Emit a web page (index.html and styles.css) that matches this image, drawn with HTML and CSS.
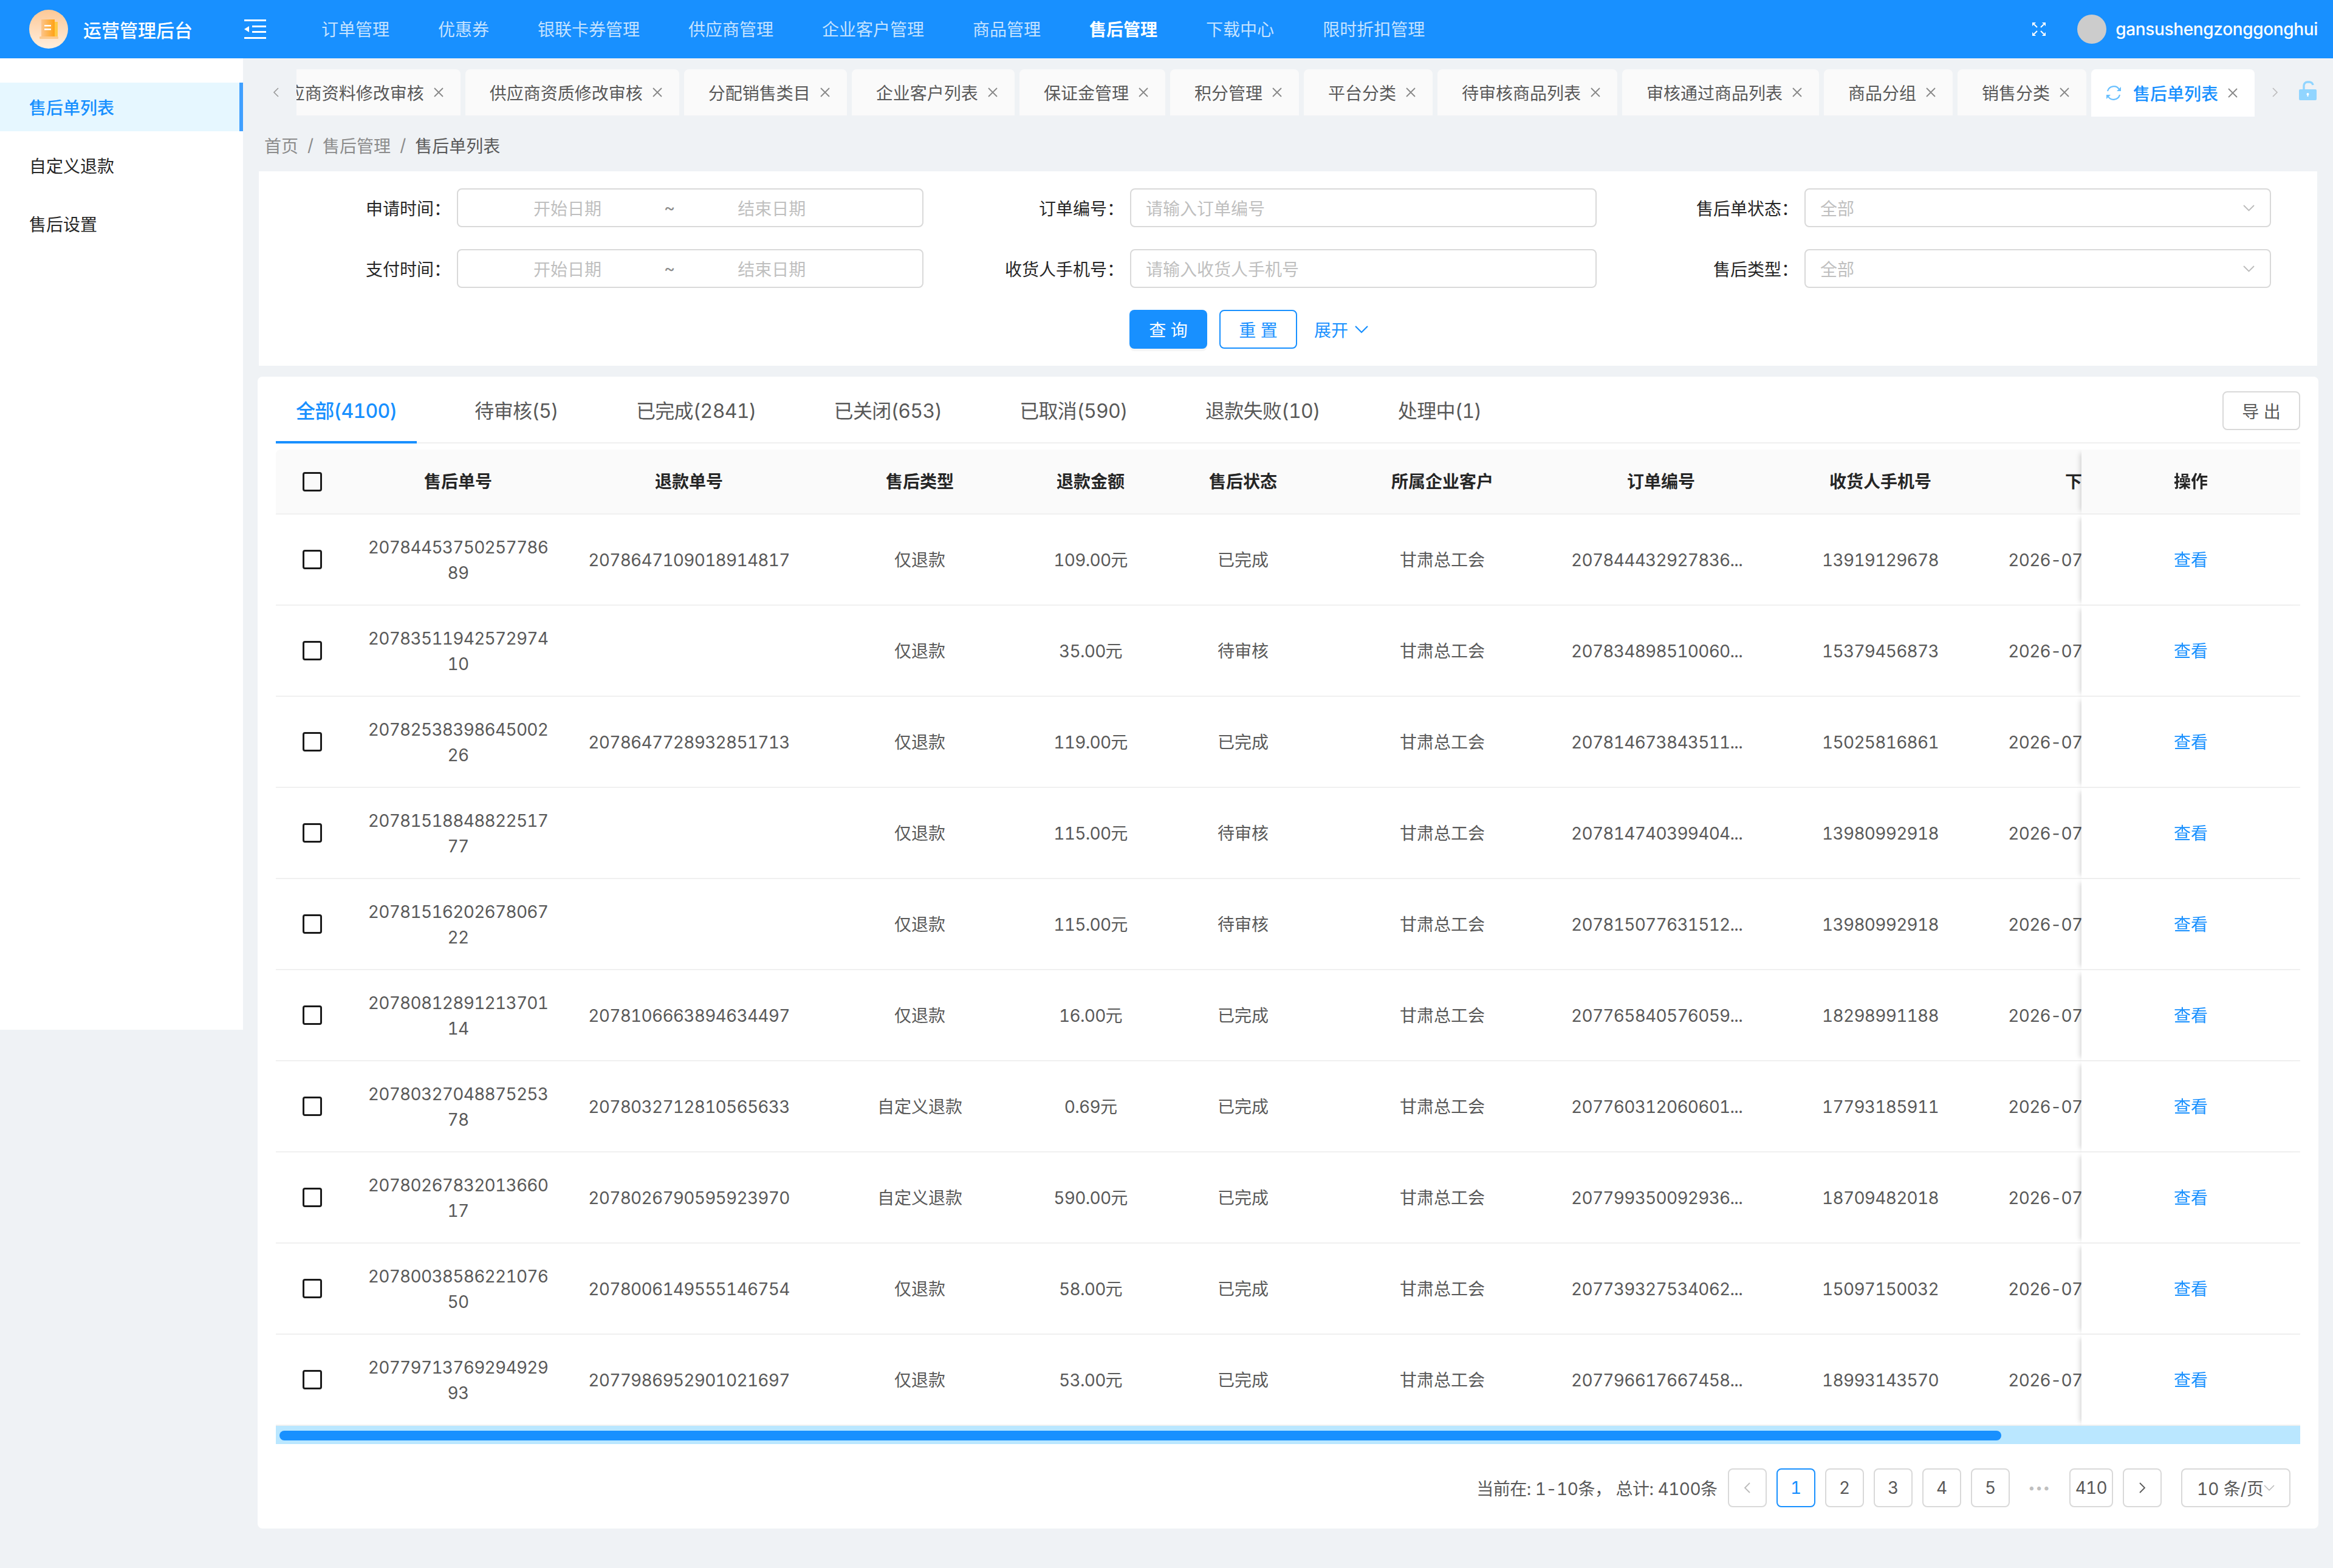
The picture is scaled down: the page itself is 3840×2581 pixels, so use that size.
FILE: index.html
```html
<!DOCTYPE html>
<html lang="zh-CN">
<head>
  <meta charset="UTF-8" />
  <title>售后单列表 | 运营管理后台</title>
  <link rel="stylesheet" href="styles.css">
</head>
<body>
  <header class="topbar">
    <div class="logo">
      <svg class="logo-mark" width="64" height="64" viewBox="0 0 64 64">
        <defs>
          <linearGradient id="logoBg" x1="0" y1="0" x2="0" y2="1">
            <stop offset="0" stop-color="#fdc896" />
            <stop offset="1" stop-color="#ffefdf" />
          </linearGradient>
          <linearGradient id="logoDoc" x1="0" y1="0" x2="1" y2="0">
            <stop offset="0" stop-color="#fdc48a" />
            <stop offset="1" stop-color="#ffa215" />
          </linearGradient>
        </defs>
        <circle cx="32" cy="32" r="32" fill="url(#logoBg)" />
        <rect x="40" y="20" width="7" height="26" fill="#ffc942" />
        <rect x="20" y="16" width="22" height="30" fill="url(#logoDoc)" />
        <rect x="25" y="25" width="11" height="2.5" fill="#fff" />
        <rect x="25" y="31" width="11" height="2.5" fill="#fff" />
        <rect x="17" y="44" width="31" height="4" rx="1" fill="#fdc98c" />
      </svg>
      <span class="logo-title">运营管理后台</span>
    </div>
    <svg class="collapse-icon" width="36" height="32" viewBox="0 0 36 32" fill="#fff">
      <rect x="0" y="0" width="36" height="3" />
      <rect x="13" y="10" width="23" height="3" />
      <rect x="13" y="19" width="23" height="3" />
      <rect x="0" y="29" width="36" height="3" />
      <polygon points="0,16 8,11 8,21" />
    </svg>
    <nav class="topnav">
      <a href="#">订单管理</a>
      <a href="#">优惠券</a>
      <a href="#">银联卡券管理</a>
      <a href="#">供应商管理</a>
      <a href="#">企业客户管理</a>
      <a href="#">商品管理</a>
      <a href="#" class="active">售后管理</a>
      <a href="#">下载中心</a>
      <a href="#">限时折扣管理</a>
    </nav>
    <div class="topbar-right">
      <svg class="fullscreen-icon" width="22" height="22" viewBox="0 0 22 22" fill="#fff" stroke="#fff" stroke-width="2">
        <path d="M3 3l5 5" />
        <path d="M19 3l-5 5" />
        <path d="M3 19l5-5" />
        <path d="M19 19l-5-5" />
        <polygon points="0,0 6,0 0,6" stroke="none" />
        <polygon points="22,0 16,0 22,6" stroke="none" />
        <polygon points="0,22 6,22 0,16" stroke="none" />
        <polygon points="22,22 16,22 22,16" stroke="none" />
      </svg>
      <span class="avatar"></span>
      <span class="username">gansushengzonggonghui</span>
    </div>
  </header>

  <div class="layout">
    <aside class="sidebar">
      <a href="#" class="side-item active">售后单列表</a>
      <a href="#" class="side-item">自定义退款</a>
      <a href="#" class="side-item">售后设置</a>
    </aside>

    <main class="content">
      <div class="page-tabs">
        <svg class="page-arrow" width="12" height="18" viewBox="0 0 12 18" fill="none" stroke="#999" stroke-width="1.6">
          <path d="M10 2L3 9l7 7" />
        </svg>
        <div class="page-tabs-list">
          <div class="page-tab">供应商资料修改审核<svg class="tab-close" width="18" height="18" viewBox="0 0 18 18"><path d="M2 2l14 14M16 2L2 16" /></svg></div>
          <div class="page-tab">供应商资质修改审核<svg class="tab-close" width="18" height="18" viewBox="0 0 18 18"><path d="M2 2l14 14M16 2L2 16" /></svg></div>
          <div class="page-tab">分配销售类目<svg class="tab-close" width="18" height="18" viewBox="0 0 18 18"><path d="M2 2l14 14M16 2L2 16" /></svg></div>
          <div class="page-tab">企业客户列表<svg class="tab-close" width="18" height="18" viewBox="0 0 18 18"><path d="M2 2l14 14M16 2L2 16" /></svg></div>
          <div class="page-tab">保证金管理<svg class="tab-close" width="18" height="18" viewBox="0 0 18 18"><path d="M2 2l14 14M16 2L2 16" /></svg></div>
          <div class="page-tab">积分管理<svg class="tab-close" width="18" height="18" viewBox="0 0 18 18"><path d="M2 2l14 14M16 2L2 16" /></svg></div>
          <div class="page-tab">平台分类<svg class="tab-close" width="18" height="18" viewBox="0 0 18 18"><path d="M2 2l14 14M16 2L2 16" /></svg></div>
          <div class="page-tab">待审核商品列表<svg class="tab-close" width="18" height="18" viewBox="0 0 18 18"><path d="M2 2l14 14M16 2L2 16" /></svg></div>
          <div class="page-tab">审核通过商品列表<svg class="tab-close" width="18" height="18" viewBox="0 0 18 18"><path d="M2 2l14 14M16 2L2 16" /></svg></div>
          <div class="page-tab">商品分组<svg class="tab-close" width="18" height="18" viewBox="0 0 18 18"><path d="M2 2l14 14M16 2L2 16" /></svg></div>
          <div class="page-tab">销售分类<svg class="tab-close" width="18" height="18" viewBox="0 0 18 18"><path d="M2 2l14 14M16 2L2 16" /></svg></div>
          <div class="page-tab active">
            <svg class="tab-refresh" width="26" height="26" viewBox="0 0 26 26" fill="none" stroke="#69c0ff" stroke-width="2.2">
              <path d="M3 10A10.5 10.5 0 0 1 22 7" />
              <path d="M23 16A10.5 10.5 0 0 1 4 19" />
              <polygon points="25,3 25,10 18,10" fill="#69c0ff" stroke="none" />
              <polygon points="1,23 1,16 8,16" fill="#69c0ff" stroke="none" />
            </svg>
            售后单列表<svg class="tab-close" width="18" height="18" viewBox="0 0 18 18"><path d="M2 2l14 14M16 2L2 16" /></svg>
          </div>
        </div>
        <svg class="page-arrow right" width="12" height="18" viewBox="0 0 12 18" fill="none" stroke="#bbb" stroke-width="1.6">
          <path d="M2 2l7 7-7 7" />
        </svg>
        <svg class="lock-icon" width="29" height="32" viewBox="0 0 29 32">
          <path d="M8 15V8a6 6 0 0 1 6-6h3a6 6 0 0 1 6 5" fill="none" stroke="#91d5ff" stroke-width="3.4" />
          <rect x="0" y="14" width="29" height="18" rx="2" fill="#91d5ff" />
          <circle cx="14.5" cy="22" r="2" fill="#fff" />
          <rect x="13.6" y="22" width="1.8" height="4" fill="#fff" />
        </svg>
      </div>

      <div class="breadcrumb">
        <span>首页</span><i>/</i><span>售后管理</span><i>/</i><span class="current">售后单列表</span>
      </div>

      <section class="filter-card">
        <label class="form-label">申请时间：</label>
        <div class="form-control range">
          <span>开始日期</span><em>~</em><span>结束日期</span>
        </div>
        <label class="form-label">订单编号：</label>
        <div class="form-control">请输入订单编号</div>
        <label class="form-label">售后单状态：</label>
        <div class="form-control select">全部
          <svg width="21" height="12" viewBox="0 0 21 12" fill="none" stroke="#bbb" stroke-width="1.8"><path d="M2 2l8.500 8.500L19 2" /></svg>
        </div>

        <label class="form-label">支付时间：</label>
        <div class="form-control range">
          <span>开始日期</span><em>~</em><span>结束日期</span>
        </div>
        <label class="form-label">收货人手机号：</label>
        <div class="form-control">请输入收货人手机号</div>
        <label class="form-label">售后类型：</label>
        <div class="form-control select">全部
          <svg width="21" height="12" viewBox="0 0 21 12" fill="none" stroke="#bbb" stroke-width="1.8"><path d="M2 2l8.500 8.500L19 2" /></svg>
        </div>

        <div class="form-actions">
          <button class="btn btn-primary">查 询</button>
          <button class="btn btn-outline">重 置</button>
          <a href="#" class="expand-link">展开
            <svg width="24" height="14" viewBox="0 0 24 14" fill="none" stroke="#1890ff" stroke-width="2.200"><path d="M2 2l10 10L22 2" /></svg>
          </a>
        </div>
      </section>

      <section class="table-card">
        <div class="status-bar">
          <div class="status-tabs">
            <a href="#" class="status-tab active">全部(4100)</a>
            <a href="#" class="status-tab">待审核(5)</a>
            <a href="#" class="status-tab">已完成(2841)</a>
            <a href="#" class="status-tab">已关闭(653)</a>
            <a href="#" class="status-tab">已取消(590)</a>
            <a href="#" class="status-tab">退款失败(10)</a>
            <a href="#" class="status-tab">处理中(1)</a>
          </div>
          <button class="export-btn">导 出</button>
        </div>

        <div class="table-wrap">
          <table class="order-table">
            <colgroup>
              <col class="col-check">
              <col class="col-no">
              <col class="col-refund">
              <col class="col-type">
              <col class="col-amount">
              <col class="col-status">
              <col class="col-company">
              <col class="col-order">
              <col class="col-phone">
              <col class="col-date">
              <col class="col-op">
            </colgroup>
            <thead>
              <tr>
                <th><span class="checkbox"></span></th>
                <th>售后单号</th>
                <th>退款单号</th>
                <th>售后类型</th>
                <th>退款金额</th>
                <th>售后状态</th>
                <th>所属企业客户</th>
                <th>订单编号</th>
                <th>收货人手机号</th>
                <th>下单时间</th>
                <th class="op">操作</th>
              </tr>
            </thead>
            <tbody>
              <tr>
                <td><span class="checkbox"></span></td>
                <td class="no-cell">2078445375025778689</td>
                <td>2078647109018914817</td>
                <td>仅退款</td>
                <td>109.00元</td>
                <td>已完成</td>
                <td>甘肃总工会</td>
                <td class="order-cell">207844432927836...</td>
                <td>13919129678</td>
                <td>2026-07-15 10:24:36</td>
                <td class="op"><a href="#">查看</a></td>
              </tr>
              <tr>
                <td><span class="checkbox"></span></td>
                <td class="no-cell">2078351194257297410</td>
                <td></td>
                <td>仅退款</td>
                <td>35.00元</td>
                <td>待审核</td>
                <td>甘肃总工会</td>
                <td class="order-cell">207834898510060...</td>
                <td>15379456873</td>
                <td>2026-07-15 09:12:08</td>
                <td class="op"><a href="#">查看</a></td>
              </tr>
              <tr>
                <td><span class="checkbox"></span></td>
                <td class="no-cell">2078253839864500226</td>
                <td>2078647728932851713</td>
                <td>仅退款</td>
                <td>119.00元</td>
                <td>已完成</td>
                <td>甘肃总工会</td>
                <td class="order-cell">207814673843511...</td>
                <td>15025816861</td>
                <td>2026-07-14 18:40:51</td>
                <td class="op"><a href="#">查看</a></td>
              </tr>
              <tr>
                <td><span class="checkbox"></span></td>
                <td class="no-cell">2078151884882251777</td>
                <td></td>
                <td>仅退款</td>
                <td>115.00元</td>
                <td>待审核</td>
                <td>甘肃总工会</td>
                <td class="order-cell">207814740399404...</td>
                <td>13980992918</td>
                <td>2026-07-14 15:03:22</td>
                <td class="op"><a href="#">查看</a></td>
              </tr>
              <tr>
                <td><span class="checkbox"></span></td>
                <td class="no-cell">2078151620267806722</td>
                <td></td>
                <td>仅退款</td>
                <td>115.00元</td>
                <td>待审核</td>
                <td>甘肃总工会</td>
                <td class="order-cell">207815077631512...</td>
                <td>13980992918</td>
                <td>2026-07-14 15:01:47</td>
                <td class="op"><a href="#">查看</a></td>
              </tr>
              <tr>
                <td><span class="checkbox"></span></td>
                <td class="no-cell">2078081289121370114</td>
                <td>2078106663894634497</td>
                <td>仅退款</td>
                <td>16.00元</td>
                <td>已完成</td>
                <td>甘肃总工会</td>
                <td class="order-cell">207765840576059...</td>
                <td>18298991188</td>
                <td>2026-07-14 11:36:19</td>
                <td class="op"><a href="#">查看</a></td>
              </tr>
              <tr>
                <td><span class="checkbox"></span></td>
                <td class="no-cell">2078032704887525378</td>
                <td>2078032712810565633</td>
                <td>自定义退款</td>
                <td>0.69元</td>
                <td>已完成</td>
                <td>甘肃总工会</td>
                <td class="order-cell">207760312060601...</td>
                <td>17793185911</td>
                <td>2026-07-14 09:58:02</td>
                <td class="op"><a href="#">查看</a></td>
              </tr>
              <tr>
                <td><span class="checkbox"></span></td>
                <td class="no-cell">2078026783201366017</td>
                <td>2078026790595923970</td>
                <td>自定义退款</td>
                <td>590.00元</td>
                <td>已完成</td>
                <td>甘肃总工会</td>
                <td class="order-cell">207799350092936...</td>
                <td>18709482018</td>
                <td>2026-07-14 09:31:44</td>
                <td class="op"><a href="#">查看</a></td>
              </tr>
              <tr>
                <td><span class="checkbox"></span></td>
                <td class="no-cell">2078003858622107650</td>
                <td>2078006149555146754</td>
                <td>仅退款</td>
                <td>58.00元</td>
                <td>已完成</td>
                <td>甘肃总工会</td>
                <td class="order-cell">207739327534062...</td>
                <td>15097150032</td>
                <td>2026-07-14 08:02:15</td>
                <td class="op"><a href="#">查看</a></td>
              </tr>
              <tr>
                <td><span class="checkbox"></span></td>
                <td class="no-cell">2077971376929492993</td>
                <td>2077986952901021697</td>
                <td>仅退款</td>
                <td>53.00元</td>
                <td>已完成</td>
                <td>甘肃总工会</td>
                <td class="order-cell">207796617667458...</td>
                <td>18993143570</td>
                <td>2026-07-13 21:17:33</td>
                <td class="op"><a href="#">查看</a></td>
              </tr>
            </tbody>
          </table>
        </div>
        <div class="scroll-track"><div class="scroll-thumb"></div></div>

        <div class="pagination">
          <span class="page-total">当前在: 1-10条， 总计: 4100条</span>
          <a href="#" class="page-btn disabled">
            <svg width="12" height="20" viewBox="0 0 12 20" fill="none" stroke="#bbb" stroke-width="1.8"><path d="M10 2l-8 8 8 8" /></svg>
          </a>
          <a href="#" class="page-btn current">1</a>
          <a href="#" class="page-btn">2</a>
          <a href="#" class="page-btn">3</a>
          <a href="#" class="page-btn">4</a>
          <a href="#" class="page-btn">5</a>
          <span class="page-dots">•••</span>
          <a href="#" class="page-btn">410</a>
          <a href="#" class="page-btn">
            <svg width="12" height="20" viewBox="0 0 12 20" fill="none" stroke="#595959" stroke-width="1.8"><path d="M2 2l8 8-8 8" /></svg>
          </a>
          <div class="page-size">10 条/页
            <svg width="18" height="10" viewBox="0 0 18 10" fill="none" stroke="#bbb" stroke-width="1.6"><path d="M1 1l8 8 8-8" /></svg>
          </div>
        </div>
      </section>
    </main>
  </div>
</body>
</html>
```

FILE: styles.css
```css
* { box-sizing: border-box; }
body {
  margin: 0;
  min-height: 2581px;
  font-family: Inter, "Noto Sans CJK SC", sans-serif;
  font-size: 28px;
  font-variant-numeric: tabular-nums;
  color: #595959;
  background-color: #eff2f5;
}
a { text-decoration: none; color: inherit; }

/* top bar */
.topbar {
  height: 96px;
  background-color: #1890ff;
  display: flex;
  align-items: center;
  padding-left: 48px;
  color: white;
}
.logo { display: flex; align-items: center; width: 354px; }
.logo-mark { flex: none; }
.logo-title { margin-left: 25px; font-size: 30px; font-weight: 500; white-space: nowrap; }
.collapse-icon { flex: none; }
.topnav { display: flex; gap: 80px; margin: 0 0 2px 91px; }
.topnav a { color: rgba(255,255,255,0.75); white-space: nowrap; }
.topnav a.active { color: white; font-weight: 700; }
.topbar-right { margin-left: auto; display: flex; align-items: center; padding-right: 25px; }
.fullscreen-icon { margin-right: 52px; }
.avatar { width: 48px; height: 48px; border-radius: 50%; background-color: #ccc; margin-right: 15px; }
.username { font-weight: 500; letter-spacing: -0.35px; white-space: nowrap; }

.layout { display: flex; align-items: flex-start; }

/* left menu */
.sidebar {
  flex: none;
  width: 400px;
  height: 1599px;
  background-color: white;
  padding-top: 40px;
  display: flex;
  flex-direction: column;
  gap: 16px;
}
.side-item { display: flex; align-items: center; height: 80px; padding-left: 48px; color: #262626; }
.side-item.active {
  background-color: #e6f7ff;
  border-right: 6px solid #40a0ff;
  color: #1890ff;
  font-weight: 500;
}

.content { flex: 1; min-width: 0; padding: 18px 24px 0; }

/* open page tabs */
.page-tabs { display: flex; align-items: flex-start; height: 76px; }
.page-arrow { flex: none; margin: 29px 0 0 24px; }
.page-arrow.right { margin: 29px 0 0 7px; }
.lock-icon { flex: none; margin: 19px 0 0 33px; }
.page-tabs-list {
  flex: none;
  width: 3244px;
  margin-left: 28px;
  padding-right: 21px;
  height: 78px;
  overflow: hidden;
  display: flex;
  justify-content: flex-end;
  gap: 8px;
}
.page-tab {
  flex: none;
  display: flex;
  align-items: center;
  height: 76px;
  padding: 0 27px 0 40px;
  background-color: #fafafa;
  border-radius: 8px 8px 0 0;
  white-space: nowrap;
}
.page-tab.active { height: 78px; padding-left: 24px; background-color: white; color: #1890ff; font-weight: 500; }
.tab-refresh { margin-right: 19px; }
.tab-close { flex: none; margin-left: 15px; fill: none; stroke: #888; stroke-width: 1.8; }

.breadcrumb { display: flex; align-items: center; height: 92px; padding: 6px 0 0 11px; color: #8c8c8c; }
.breadcrumb i { font-style: normal; margin: 0 15px; }
.breadcrumb .current { color: #595959; }

/* filter form */
.filter-card {
  margin: 0 2px;
  padding: 28px 0;
  background-color: white;
  display: grid;
  grid-template-columns: 326px 768px 340px 768px 342px 768px;
  row-gap: 36px;
  align-items: center;
}
.form-label { text-align: right; padding-right: 10px; color: #262626; }
.form-control {
  display: flex;
  align-items: center;
  height: 64px;
  padding: 0 24px;
  border: 2px solid #d9d9d9;
  border-radius: 8px;
  color: #bfbfbf;
}
.form-control.range { padding: 0 0 0 124px; gap: 103px; }
.form-control.range em { font-style: normal; color: #8c8c8c; }
.form-control.select { justify-content: space-between; }
.form-actions { grid-column: 4 / 7; display: flex; align-items: center; margin-left: -1px; }
.btn {
  width: 128px;
  height: 64px;
  margin-right: 20px;
  font: inherit;
  border-radius: 8px;
  cursor: pointer;
}
.btn-primary { background-color: #1890ff; color: white; border: none; box-shadow: 0 4px 0 rgba(0,0,0,0.04); }
.btn-outline { background-color: white; color: #1890ff; border: 2px solid #1890ff; }
.expand-link { display: flex; align-items: center; gap: 10px; margin-left: 8px; color: #1890ff; }

/* table card */
.table-card {
  margin-top: 18px;
  height: 1896px;
  padding: 0 30px;
  background-color: white;
  border-radius: 8px;
}
.status-bar {
  display: flex;
  justify-content: space-between;
  height: 110px;
  border-bottom: 2px solid #f0f0f0;
}
.status-tabs { display: flex; gap: 62px; height: 110px; }
.status-tab {
  height: 110px;
  padding: 31px 33px 0;
  font-size: 32px;
  line-height: 52px;
  letter-spacing: -0.7px;
  border-bottom: 4px solid transparent;
  white-space: nowrap;
}
.status-tab.active { color: #1890ff; font-weight: 500; border-bottom-color: #1890ff; }
.export-btn {
  width: 128px;
  height: 64px;
  margin-top: 24px;
  font: inherit;
  color: #595959;
  background-color: white;
  border: 2px solid #d9d9d9;
  border-radius: 8px;
  cursor: pointer;
}

.table-wrap { margin-top: 10px; overflow: hidden; }
.order-table { table-layout: fixed; width: 3542px; border-collapse: separate; border-spacing: 0; }
.col-check { width: 120px; }
.col-no { width: 360px; }
.col-refund { width: 400px; }
.col-type { width: 360px; }
.col-amount { width: 202px; }
.col-status { width: 300px; }
.col-company { width: 356px; }
.col-order { width: 364px; }
.col-phone { width: 358px; }
.col-date { width: 362px; }
.col-op { width: 360px; }

.order-table th,
.order-table td {
  text-align: center;
  border-bottom: 2px solid #f0f0f0;
  padding: 2px 28px 0;
  line-height: 42px;
  white-space: nowrap;
}
.order-table th {
  height: 107px;
  padding-top: 0;
  background-color: #fafafa;
  color: #262626;
  font-weight: 600;
}
.order-table th:first-child { border-top-left-radius: 8px; }
.order-table td { height: 150px; letter-spacing: -0.72px; }
.order-table td:nth-child(4),
.order-table td:nth-child(6),
.order-table td:nth-child(7),
.order-table td.op { letter-spacing: 0; }
.order-table td:first-child { padding-top: 0; }
.order-table td.no-cell { white-space: normal; word-break: break-all; }
.order-table td.order-cell { padding-right: 42px; }
.order-table .op {
  position: sticky;
  right: 0;
  box-shadow: -8px 0 8px -6px rgba(0,0,0,0.18);
}
.order-table td.op { background-color: white; }
.order-table td.op a { color: #1890ff; }
.checkbox {
  display: block;
  width: 32px;
  height: 32px;
  margin: 0 auto;
  border: 3px solid #1a1a1a;
  border-radius: 4px;
}

.scroll-track { height: 30px; padding: 8px 6px 0; background-color: #bae7ff; }
.scroll-thumb { width: 2834px; height: 16px; background-color: #1890ff; border-radius: 8px; }

/* pagination */
.pagination {
  display: flex;
  align-items: center;
  justify-content: flex-end;
  gap: 16px;
  margin-top: 40px;
  padding-right: 16px;
}
.page-total { margin-right: 1px; letter-spacing: -0.5px; white-space: nowrap; }
.page-btn {
  display: flex;
  align-items: center;
  justify-content: center;
  min-width: 64px;
  height: 64px;
  padding: 0 8px;
  border: 2px solid #d9d9d9;
  border-radius: 8px;
  letter-spacing: -0.7px;
  background-color: white;
}
.page-btn.current { border-color: #1890ff; color: #1890ff; }
.page-dots { width: 66px; text-align: center; font-size: 20px; letter-spacing: 1px; color: #bfbfbf; }
.page-size {
  display: flex;
  align-items: center;
  justify-content: space-between;
  width: 180px;
  height: 64px;
  margin-left: 16px;
  padding: 0 24px;
  border: 2px solid #d9d9d9;
  border-radius: 8px;
  white-space: nowrap;
}
```
